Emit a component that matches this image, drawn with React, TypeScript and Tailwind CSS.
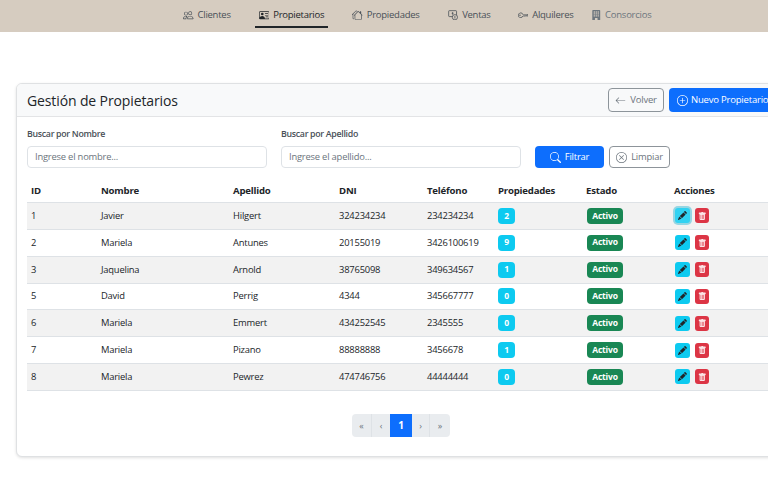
import { BsPeople, BsPersonVcard, BsHouses, BsKey, BsBuildingFill, BsArrowLeft, BsPlusCircle, BsSearch, BsXCircle, BsPencilFill, BsTrashFill } from "react-icons/bs";

const rows = [
  ["1", "Javier", "Hilgert", "324234234", "234234234", "2"],
  ["2", "Mariela", "Antunes", "20155019", "3426100619", "9"],
  ["3", "Jaquelina", "Arnold", "38765098", "349634567", "1"],
  ["5", "David", "Perrig", "4344", "345667777", "0"],
  ["6", "Mariela", "Emmert", "434252545", "2345555", "0"],
  ["7", "Mariela", "Pizano", "88888888", "3456678", "1"],
  ["8", "Mariela", "Pewrez", "474746756", "44444444", "0"],
];

const cols = "grid grid-cols-[70px_132px_106px_88px_71px_88px_88px_120px]";

function VentasIcon() {
  return (
    <svg viewBox="0 0 16 16" width="1em" height="1em" fill="none" stroke="currentColor" strokeWidth="1.2">
      <rect x="1" y="1" width="12" height="9" rx="1" />
      <path d="M7 3.2v4M5.6 5h2.8" />
      <circle cx="10.5" cy="11" r="4" fill="#d6ccc0" />
      <path d="M10.5 9v4" />
    </svg>
  );
}

function NavItem({ icon, label, active, muted, cls }: { icon: React.ReactNode; label: string; active?: boolean; muted?: boolean; cls?: string }) {
  return (
    <div className={`flex h-[24px] items-center gap-[4px] px-[4px] border-b-2 ${cls ?? ""} ${active ? "border-[#212529] text-[#212529]" : "border-transparent"} ${muted ? "text-[#6c757d]" : active ? "" : "text-[#495057]"}`}>
      <span className="text-[10.5px]">{icon}</span>
      <span className={`text-[9.5px] tracking-[-0.25px] leading-none ${active ? "font-medium" : ""}`}>{label}</span>
    </div>
  );
}

export default function App() {
  return (
    <div className="w-[768px] h-[500px] overflow-hidden bg-white font-['Open_Sans','Noto_Sans',sans-serif] tracking-[-0.2px] text-[#212529]">
      <nav className="h-[32px] bg-[#d6ccc0] flex gap-[20px] pl-[179px] pt-[4px]">
        <NavItem icon={<BsPeople />} label="Clientes" />
        <NavItem icon={<BsPersonVcard />} label="Propietarios" active />
        <NavItem icon={<BsHouses />} label="Propiedades" />
        <NavItem icon={<VentasIcon />} label="Ventas" />
        <NavItem icon={<BsKey />} label="Alquileres" cls="ml-[-1px]" />
        <NavItem icon={<BsBuildingFill />} label="Consorcios" muted cls="ml-[-11px]" />
      </nav>
      <div className="pt-[51px] pl-[16px]">
        <div className="w-[780px] h-[374px] rounded-[6px] border border-[#dfe1e3] shadow-[0_1px_3px_rgba(0,0,0,0.12)] bg-white overflow-hidden">
          <div className="h-[33px] bg-[#f8f9fa] border-b border-[#e3e4e6] flex items-center justify-between pl-[10px] pr-0">
            <h1 className="text-[14px] font-medium tracking-[-0.12px]">Gestión de Propietarios</h1>
            <div className="flex gap-[5px] w-[187px] shrink-0">
              <button className="h-[24px] w-[56px] shrink-0 rounded-[4px] border border-[#8d949a] text-[#6c757d] text-[9.5px] flex items-center justify-center gap-[4px]"><BsArrowLeft className="text-[11px]" />Volver</button>
              <button className="h-[24px] shrink-0 rounded-[4px] bg-[#0d6efd] text-white text-[9.5px] flex items-center gap-[3px] px-[8px]"><BsPlusCircle className="text-[11px]" />Nuevo Propietario</button>
            </div>
          </div>
          <div className="px-[10px] pt-[11px]">
            <div className="flex items-end">
              <div className="w-[240px]">
                <div className="text-[8.8px] tracking-[-0.3px] font-semibold text-[#495057] mb-[5px] leading-[13px]">Buscar por Nombre</div>
                <div className="h-[22px] rounded-[4px] border border-[#dee2e6] flex items-center pl-[7px] text-[9.4px] text-[#6c757d]">Ingrese el nombre...</div>
              </div>
              <div className="w-[240px] ml-[14px]">
                <div className="text-[8.8px] tracking-[-0.3px] font-semibold text-[#495057] mb-[5px] leading-[13px]">Buscar por Apellido</div>
                <div className="h-[22px] rounded-[4px] border border-[#dee2e6] flex items-center pl-[7px] text-[9.4px] text-[#6c757d]">Ingrese el apellido...</div>
              </div>
              <button className="ml-[14px] h-[22px] w-[69px] rounded-[4px] bg-[#0d6efd] text-white text-[9.4px] flex items-center justify-center gap-[4px]"><BsSearch className="text-[11px]" />Filtrar</button>
              <button className="ml-[5px] h-[22px] w-[61px] rounded-[4px] border border-[#8d949a] text-[#6c757d] text-[9.4px] flex items-center justify-center gap-[4px]"><BsXCircle className="text-[11px]" />Limpiar</button>
            </div>
            <div className={`${cols} h-[23px] mt-[12px] items-center text-[9.6px] font-bold border-b border-[#dee2e6] pl-[4px]`}>
              <div>ID</div><div>Nombre</div><div>Apellido</div><div>DNI</div><div>Teléfono</div><div>Propiedades</div><div>Estado</div><div>Acciones</div>
            </div>
            {rows.map((r, i) => (
              <div key={r[0]} className={`${cols} h-[26.85px] items-center text-[9.4px] border-b border-[#dee2e6] pl-[4px] ${i % 2 === 0 ? "bg-[#f2f2f2]" : "bg-white"}`}>
                <div>{r[0]}</div><div>{r[1]}</div><div>{r[2]}</div><div>{r[3]}</div><div>{r[4]}</div>
                <div><span className="inline-flex items-center justify-center w-[17px] h-[16px] rounded-[4px] bg-[#0dcaf0] text-white text-[8.5px] font-bold align-middle">{r[5]}</span></div>
                <div className="pl-[1px]"><span className="inline-flex items-center justify-center w-[36px] h-[16px] rounded-[4px] bg-[#198754] text-white text-[8.5px] font-bold align-middle">Activo</span></div>
                <div className="flex items-center gap-[5px] pl-[1px]">
                  <span className={`flex items-center justify-center w-[14.5px] h-[15px] rounded-[3px] text-[#212529] text-[9px] ${i === 0 ? "shadow-[0_0_0_2px_rgba(11,172,204,0.4)] bg-[#31d2f2]" : "bg-[#0dcaf0]"}`}><BsPencilFill /></span>
                  <span className="flex items-center justify-center w-[14.5px] h-[15px] rounded-[3px] bg-[#dc3545] text-[#fbe4e6] text-[8.5px]"><BsTrashFill /></span>
                </div>
              </div>
            ))}
            <div className="flex justify-center mt-[23px] w-[748px]">
              <div className="flex h-[23px] rounded-[4px] overflow-hidden text-[9px] text-[#6c757d] bg-[#e9ecef]">
                <span className="w-[20px] flex items-center justify-center border-r border-[#dee2e6]">«</span>
                <span className="w-[18px] flex items-center justify-center">‹</span>
                <span className="w-[22px] flex items-center justify-center bg-[#0d6efd] text-white font-bold text-[10px]">1</span>
                <span className="w-[18px] flex items-center justify-center border-r border-[#dee2e6]">›</span>
                <span className="w-[20px] flex items-center justify-center">»</span>
              </div>
            </div>
          </div>
        </div>
      </div>
    </div>
  );
}
